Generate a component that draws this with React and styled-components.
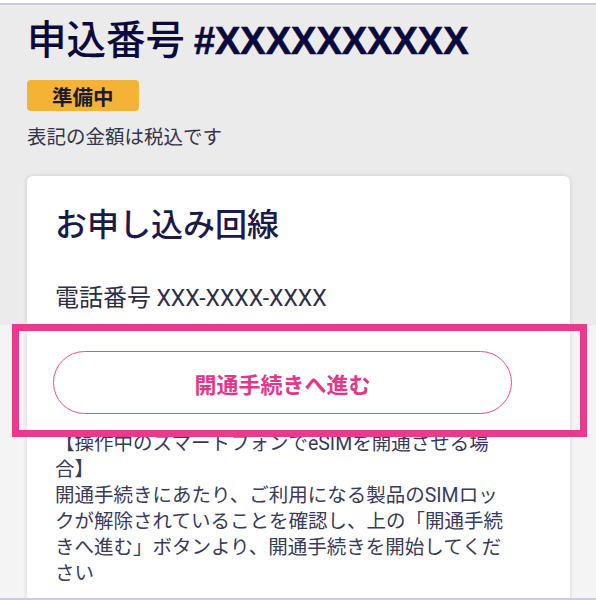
import React from 'react'
import styled, { createGlobalStyle } from 'styled-components'

const GlobalStyle = createGlobalStyle`
  html, body {
    margin: 0;
    background: #ffffff;
  }
  body {
    font-family: "Noto Sans CJK JP", "Noto Sans", sans-serif;
  }
`;

const Frame = styled.div`
  position: relative;
  margin-top: 3px;
  height: 593px;
  overflow: hidden;
  border-top: 2px solid #cbcbd9;
  border-bottom: 2px solid #cbcbd9;
  background: linear-gradient(#ebebeb 0 320px, #f4f4f5 320px);
`;

const Header = styled.div`
  padding: 9px 27px 0;
  display: flex;
  flex-direction: column;
  align-items: flex-start;
`;

const Title = styled.h1`
  margin: 0;
  font-size: 39.5px;
  line-height: 46px;
  font-weight: 500;
  color: #0b0a3d;
  white-space: nowrap;
`;

const Number = styled.span`
  font-family: "Liberation Sans", Arial, sans-serif;
  font-size: 38px;
  font-weight: 700;
  -webkit-text-stroke: 0.6px #0b0a3d;
`;

const Badge = styled.span`
  margin-top: 16px;
  display: inline-flex;
  align-items: center;
  height: 31px;
  padding: 0 25px;
  border-radius: 4px;
  background: #f5b335;
  color: #1b1b2e;
  font-size: 20.5px;
  font-weight: 700;
`;

const Note = styled.p`
  margin: 11px 0 0;
  font-size: 19.5px;
  line-height: 27px;
  color: #34344a;
`;

const Card = styled.section`
  margin: 27px 26px 0 27px;
  padding: 25px 28px 40px;
  background: #ffffff;
  border-radius: 6px;
  box-shadow: 0 0 4px rgba(40, 40, 80, 0.16);
`;

const CardTitle = styled.h2`
  margin: 0;
  font-size: 32px;
  line-height: 42px;
  font-weight: 500;
  color: #1b1a48;
`;

const Phone = styled.p`
  margin: 37px 0 0;
  font-size: 24px;
  line-height: 31px;
  color: #2e2e48;
  font-family: "Noto Sans CJK JP", sans-serif;
`;

const Digits = styled.span`
  font-family: Roboto, sans-serif;
  font-size: 23px;
`;

const ActionButton = styled.button`
  margin: 37px 0 0 -2px;
  width: 459px;
  height: 63px;
  border-radius: 32px;
  border: 1.5px solid #ec4a96;
  background: #ffffff;
  color: #e4378a;
  font-family: "Noto Sans CJK JP", sans-serif;
  font-size: 22px;
  font-weight: 700;
  cursor: pointer;
`;

const Body = styled.p`
  margin: 17px 0 0;
  max-width: 460px;
  font-size: 19.5px;
  line-height: 26px;
  color: #3a3a5a;
  font-family: Roboto, "Noto Sans CJK JP", sans-serif;
`;

const Highlight = styled.div`
  position: absolute;
  left: 12px;
  top: 319px;
  width: 575px;
  height: 113px;
  box-sizing: border-box;
  border: 7px solid #ea3a8e;
  pointer-events: none;
`;

export default function App() {
  return (
    <>
      <GlobalStyle />
      <Frame>
        <Header>
          <Title>申込番号 <Number>#XXXXXXXXXX</Number></Title>
          <Badge>準備中</Badge>
          <Note>表記の金額は税込です</Note>
        </Header>

        <Card>
          <CardTitle>お申し込み回線</CardTitle>
          <Phone>電話番号 <Digits>XXX-XXXX-XXXX</Digits></Phone>
          <ActionButton>開通手続きへ進む</ActionButton>
          <Body>
            【操作中のスマートフォンでeSIMを開通させる場合】
            <br />
            開通手続きにあたり、ご利用になる製品のSIMロックが解除されていることを確認し、上の「開通手続きへ進む」ボタンより、開通手続きを開始してください
          </Body>
        </Card>

        <Highlight />
      </Frame>
    </>
  )
}
